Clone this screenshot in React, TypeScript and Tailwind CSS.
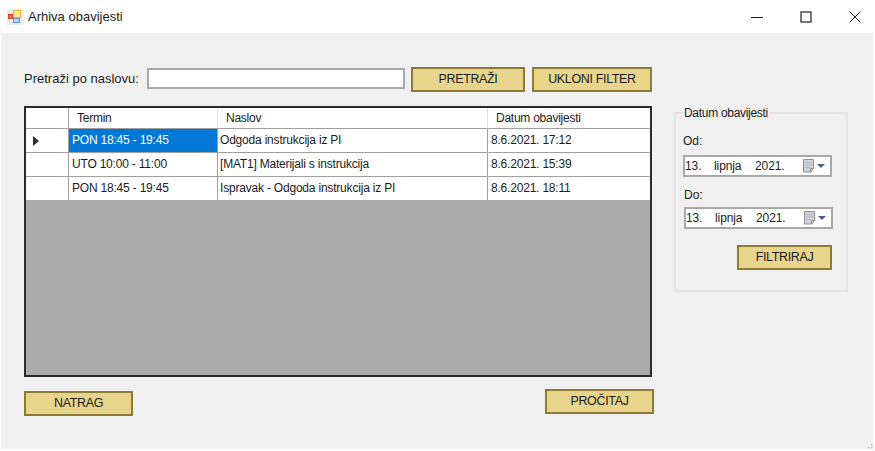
import React from 'react'

const rows = [
  { termin: 'PON 18:45 - 19:45', naslov: 'Odgoda instrukcija iz PI', datum: '8.6.2021. 17:12', selected: true },
  { termin: 'UTO 10:00 - 11:00', naslov: '[MAT1] Materijali s instrukcija', datum: '8.6.2021. 15:39', selected: false },
  { termin: 'PON 18:45 - 19:45', naslov: 'Ispravak - Odgoda instrukcija iz PI', datum: '8.6.2021. 18:11', selected: false },
]

function GoldButton({ label, className }: { label: string; className: string }) {
  return (
    <button className={'flex items-center justify-center border-2 border-[#8f7a35] bg-[#e8d48b] text-[12.5px] tracking-[-0.35px] text-[#1c1c1c] ' + className}>
      {label}
    </button>
  )
}

function AppIcon() {
  return (
    <svg width="16" height="16" viewBox="0 0 16 16">
      <rect x="0" y="0" width="16" height="16" fill="#ececec" />
      <rect x="1" y="5" width="5" height="5" fill="#d9412e" />
      <rect x="2.5" y="6.5" width="2" height="2" fill="#f4a9a0" />
      <rect x="6" y="1" width="8" height="8" fill="#f2b632" />
      <rect x="7" y="2" width="6" height="6" fill="#fde38a" />
      <rect x="6" y="9" width="7" height="5" fill="#5a8ed8" />
      <rect x="7" y="10" width="5" height="3" fill="#bcd4f2" />
    </svg>
  )
}

function DatePicker({ className }: { className: string }) {
  return (
    <div className={'flex h-[22px] w-[149px] items-center border-2 border-[#a8a8a8] bg-white text-[12px] tracking-[-0.1px] text-[#1c1c1c] ' + className}>
      <span className="w-[29px]">13.</span>
      <span className="w-[41px]">lipnja</span>
      <span>2021.</span>
      <svg className="ml-auto mr-[5px]" width="22" height="14" viewBox="0 0 22 14">
        <path d="M0.5 0.5h10v9l-3 3.5h-7z" fill="#cfd3d9" stroke="#8a8f96" />
        <path d="M2 3.5h7M2 6h7M2 8.5h5" stroke="#b4b8be" />
        <path d="M7.5 13l3-3.5h-3z" fill="#f7f7f7" stroke="#8a8f96" />
        <path d="M14 5h8l-4 4z" fill="#45608c" />
      </svg>
    </div>
  )
}

export default function App() {
  return (
    <div className="flex h-[451px] w-[875px] flex-col bg-white font-['Liberation_Sans',sans-serif] text-[#1c1c1c]">
      {/* title bar */}
      <div className="flex h-[33px] shrink-0 items-center">
        <div className="ml-[7px] mr-[5px] flex">
          <AppIcon />
        </div>
        <span className="text-[13px]">Arhiva obavijesti</span>
        <div className="ml-auto mr-[14px] flex items-center gap-[37px]">
          <svg width="12" height="12" viewBox="0 0 12 12"><path d="M0 6.5h12" stroke="#222" strokeWidth="1" /></svg>
          <svg width="12" height="12" viewBox="0 0 12 12"><rect x="1" y="1" width="10" height="10" fill="none" stroke="#222" strokeWidth="1.2" /></svg>
          <svg width="12" height="12" viewBox="0 0 12 12"><path d="M0.5 0.5l11 11M11.5 0.5l-11 11" stroke="#222" strokeWidth="1" /></svg>
        </div>
      </div>

      {/* form */}
      <div className="relative ml-px mr-[2px] flex h-[416px] bg-[#f0f0f0] pl-[23px]">
        <div className="w-[631px] shrink-0">
          <div className="mt-[34px] flex items-center">
            <span className="mb-[1px] w-[123px] text-[13px]">Pretraži po naslovu:</span>
            <div className="mb-[2px] h-[21px] w-[258px] border-2 border-[#a8a8a8] bg-white" />
            <GoldButton label="PRETRAŽI" className="ml-[6px] h-[25px] w-[114px]" />
            <GoldButton label="UKLONI FILTER" className="ml-[7px] h-[25px] w-[120px]" />
          </div>

          {/* grid */}
          <div className="mt-[14px] flex h-[271px] w-[628px] flex-col border-2 border-[#2b2b2b] bg-[#ababab]">
            <div className="w-[624px] bg-[#a0a0a0]">
              <div className="flex h-[20px] bg-white text-[12px] tracking-[-0.25px]">
                <div className="w-[43px] border-r border-[#a0a0a0]" />
                <div className="w-[149px] border-r border-[#e3e3e3] pl-[8px] leading-[20px]">Termin</div>
                <div className="w-[270px] border-r border-[#e3e3e3] pl-[8px] leading-[20px]">Naslov</div>
                <div className="flex-1 pl-[8px] leading-[20px]">Datum obavijesti</div>
              </div>
              {rows.map((r) => (
                <div key={r.datum} className="flex h-[24px] border-t border-[#a0a0a0] text-[12px] leading-[23px] tracking-[-0.2px]">
                  <div className="flex w-[43px] items-center border-r border-[#a0a0a0] bg-white pl-[7px]">
                    {r.selected && (
                      <svg width="6" height="10" viewBox="0 0 6 10"><path d="M0 0l6 5-6 5z" fill="#2f2f2f" /></svg>
                    )}
                  </div>
                  <div className={'w-[149px] border-r border-[#a0a0a0] pl-[3px] ' + (r.selected ? 'bg-[#0078d7] text-white' : 'bg-white')}>
                    {r.termin}
                  </div>
                  <div className="w-[270px] border-r border-[#a0a0a0] bg-white pl-[2px]">{r.naslov}</div>
                  <div className="flex-1 bg-white pl-[3px]">{r.datum}</div>
                </div>
              ))}
            </div>
          </div>

          <div className="flex items-start justify-between">
            <GoldButton label="NATRAG" className="mt-[14px] h-[25px] w-[109px]" />
            <GoldButton label="PROČITAJ" className="mr-[1px] mt-[12px] h-[25px] w-[109px]" />
          </div>
        </div>

        {/* date filter group */}
        <fieldset className="ml-[19px] mt-[71px] h-[188px] w-[174px] border-2 border-[#e4e4e4] pl-[7px]">
          <legend className="px-[1px] text-[12px] tracking-[-0.3px]">Datum obavijesti</legend>
          <div className="mt-[10px] text-[12px]">Od:</div>
          <DatePicker className="mt-[5px]" />
          <div className="ml-px mt-[9px] text-[12px]">Do:</div>
          <DatePicker className="ml-px mt-[3px]" />
          <GoldButton label="FILTRIRAJ" className="ml-[54px] mt-[16px] h-[25px] w-[95px]" />
        </fieldset>

        {/* resize grip */}
        <svg className="absolute bottom-0 right-0" width="5" height="5" viewBox="0 0 5 5">
          <path d="M3 0h1.5v1.5H3zM0 3h1.5v1.5H0zM3 3h1.5v1.5H3z" fill="#b5b5b5" />
        </svg>
      </div>
    </div>
  )
}
